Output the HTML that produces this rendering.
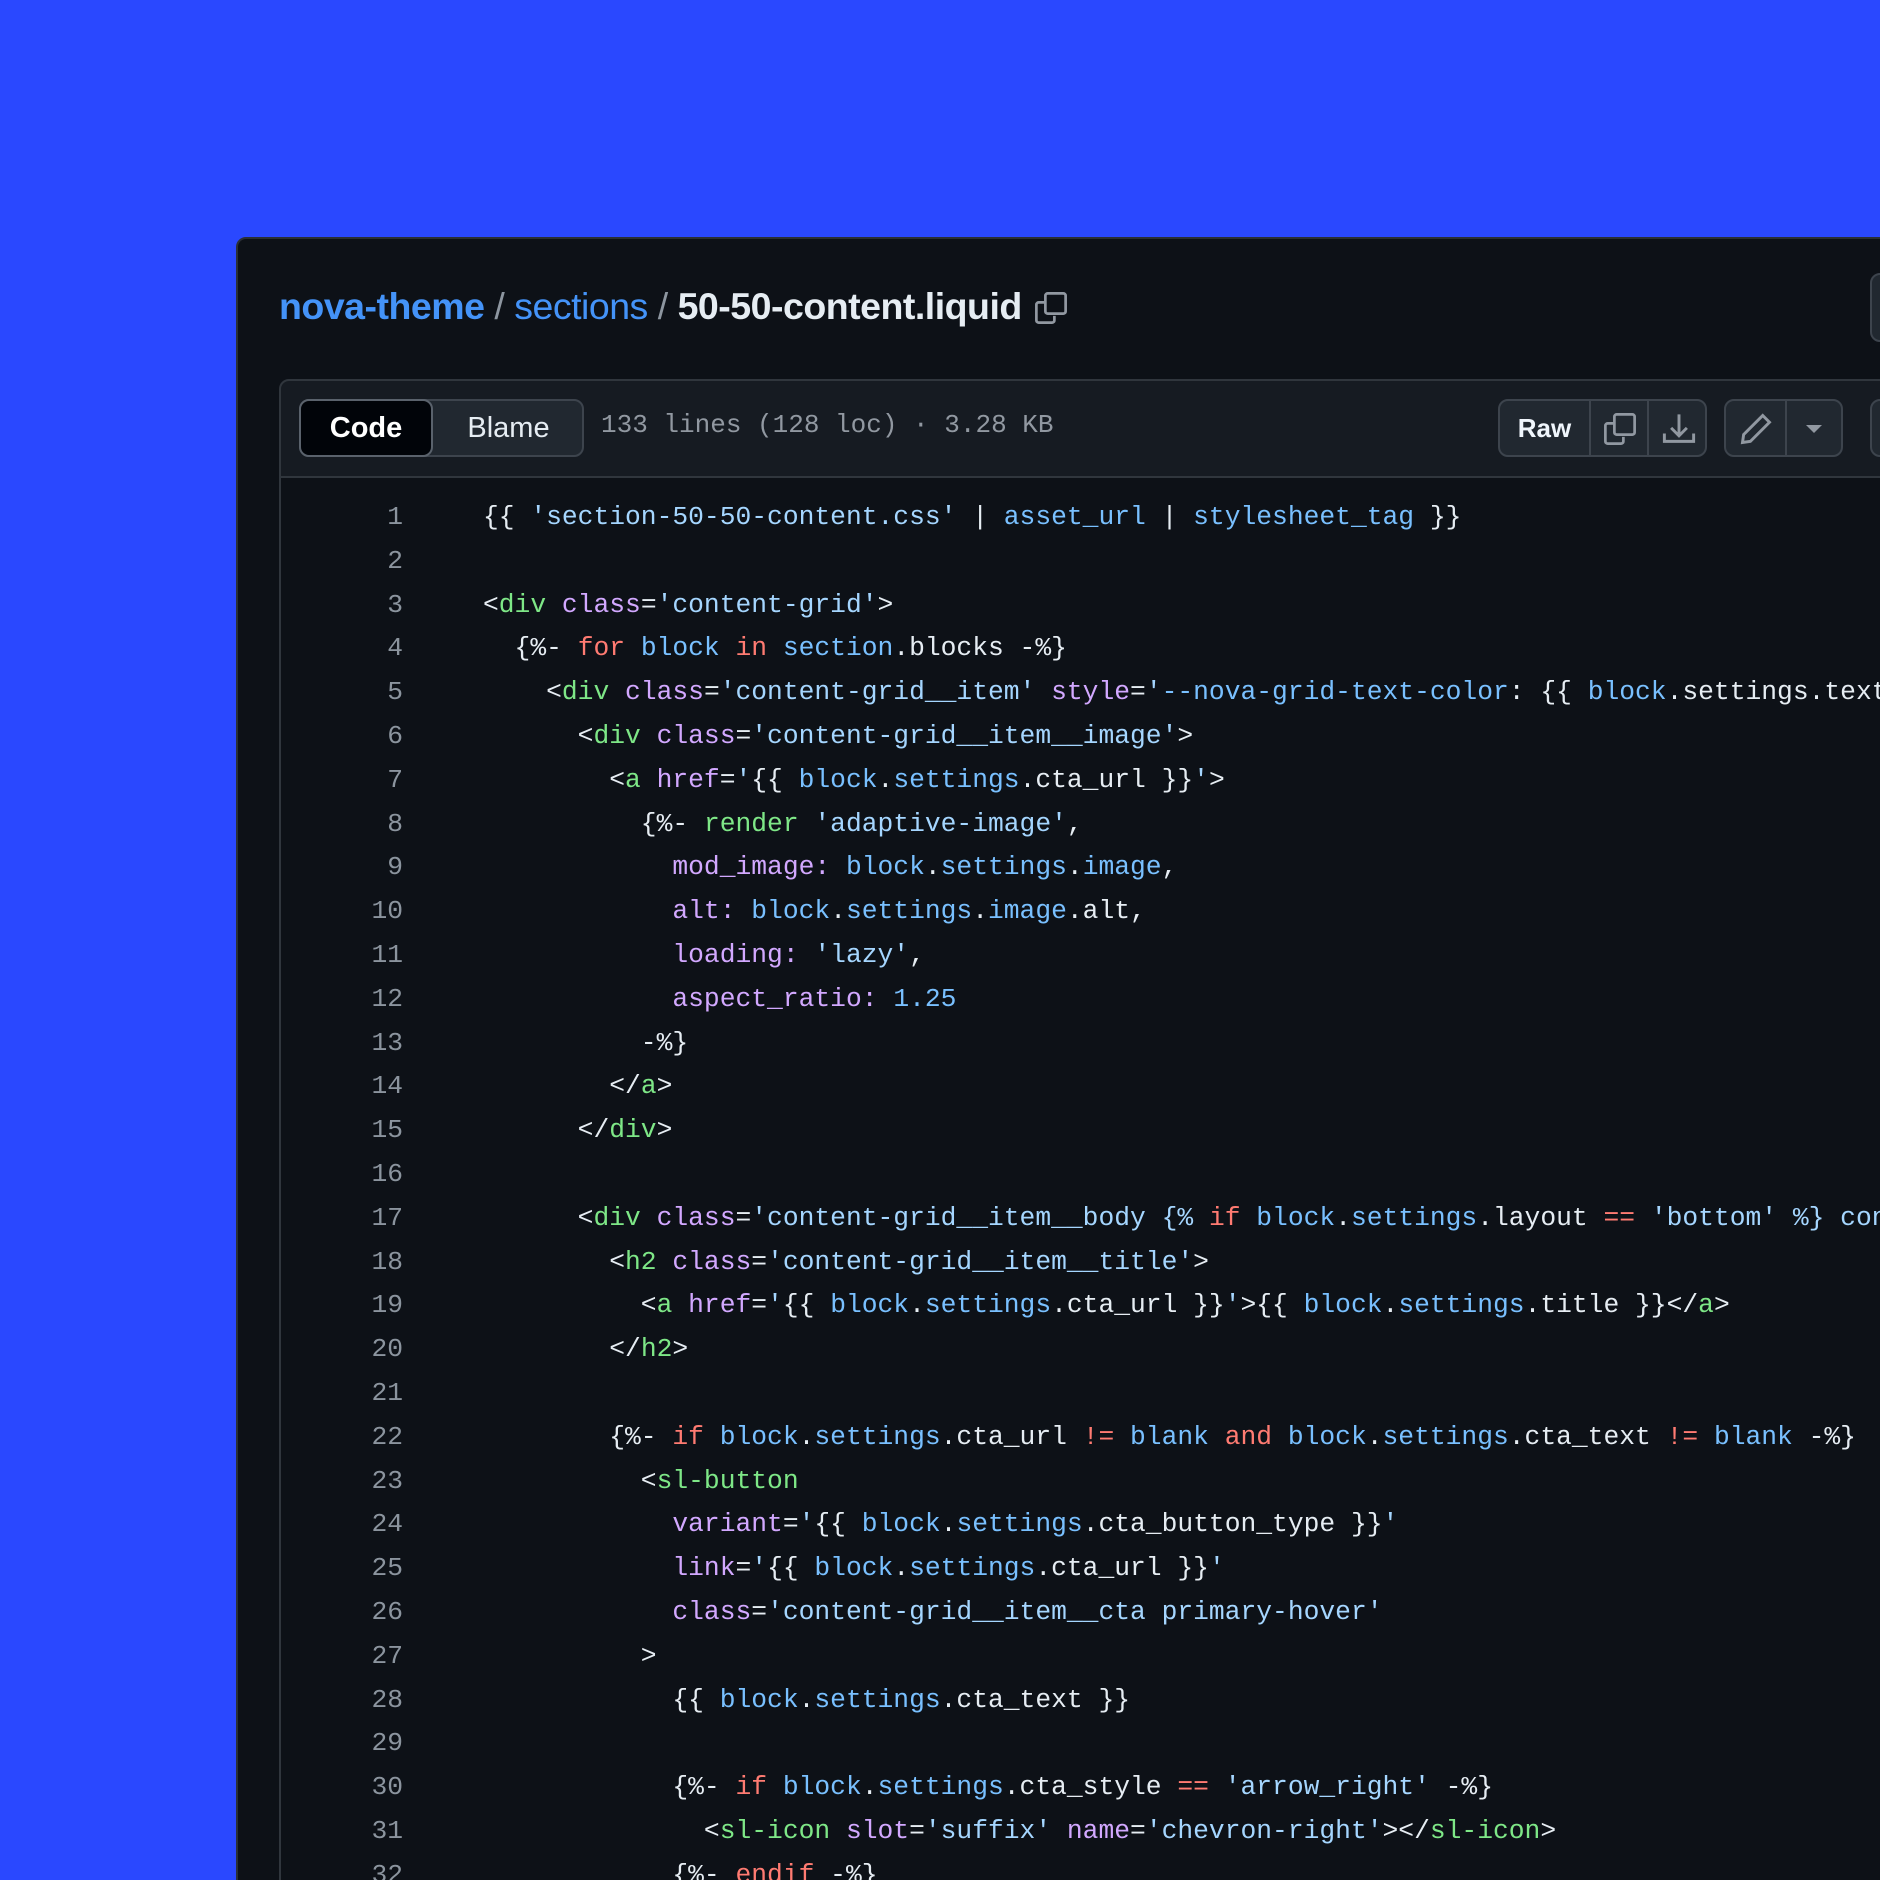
<!DOCTYPE html>
<html><head><meta charset="utf-8"><style>
*{margin:0;padding:0;box-sizing:border-box}
html,body{width:1880px;height:1880px;overflow:hidden}
body{background:#2a48ff;font-family:"Liberation Sans",sans-serif}
.clip{position:absolute;left:0;top:0;width:1880px;height:1880px;overflow:hidden}
.win{position:absolute;left:236px;top:237px;width:1700px;height:1700px;background:#0d1117;border:2px solid #2a2f36;border-radius:10px 0 0 0}
.bc{position:absolute;left:279px;top:285px;font-size:37.5px;font-weight:bold;color:#e6edf3;letter-spacing:-0.5px;white-space:nowrap}
.bc .l{color:#4493f8}.bc .sl{color:#8d96a0;font-weight:normal}
.tb{position:absolute;left:279px;top:379px;width:1700px;height:99px;background:#161b22;border:2px solid #30363d;border-radius:10px 0 0 0}
.code{position:absolute;left:279px;top:477px;width:1700px;height:1500px;border-left:2px solid #30363d}
.btn{position:absolute;height:58px;top:399px;border:2px solid #3d444d;border-radius:10px;background:#212830}
.seg{position:absolute;top:0;bottom:0;border-left:2px solid #3d444d}
.lines{position:absolute;top:496px;left:0;font-family:"Liberation Mono",monospace;font-size:26.3px;line-height:43.8px;white-space:pre}
.ln{position:absolute;left:300px;width:103px;text-align:right;color:#8b949e}
.src{position:absolute;left:483px;color:#e6edf3}
.s{color:#a5d6ff}.b{color:#79c0ff}.g{color:#7ee787}.p{color:#d2a8ff}.k{color:#ff7b72}
</style></head><body><div class="clip">
<div class="win"></div>
<div class="bc"><span class="l">nova-theme</span> <span class="sl">/</span> <span class="l" style="font-weight:normal">sections</span> <span class="sl">/</span> 50-50-content.liquid</div>
<svg style="position:absolute;left:1033px;top:290px" width="36" height="36" viewBox="0 0 16 16" fill="none" stroke="#9198a1" stroke-width="1.2"><path d="M5.5 5.5H2.5a1 1 0 0 0-1 1v7a1 1 0 0 0 1 1h6a1 1 0 0 0 1-1v-2"/><rect x="5.5" y="1.5" width="9" height="9" rx="1"/></svg>
<div style="position:absolute;left:1870px;top:273px;width:40px;height:69px;border:2px solid #3d444d;border-radius:10px;background:#212830"></div>
<div class="tb"></div>
<div style="position:absolute;left:299px;top:399px;width:285px;height:58px;border:2px solid #3d444d;border-radius:10px;background:#212830"></div>
<div style="position:absolute;left:299px;top:399px;width:134px;height:58px;border:2px solid #5a626c;border-radius:10px;background:#010409;color:#fff;font-size:29px;font-weight:bold;text-align:center;line-height:54px">Code</div>
<div style="position:absolute;left:433px;top:399px;width:151px;height:58px;color:#e6edf3;font-size:29px;text-align:center;line-height:58px">Blame</div>
<div style="position:absolute;left:601px;top:410px;font-family:'Liberation Mono',monospace;font-size:26px;color:#9198a1;white-space:pre">133 lines (128 loc) · 3.28 KB</div>
<div class="btn" style="left:1498px;width:209px"><div class="seg" style="left:89px"></div><div class="seg" style="left:147px"></div>
<div style="position:absolute;left:0;width:89px;text-align:center;line-height:54px;color:#f0f6fc;font-weight:bold;font-size:26px">Raw</div>
<svg style="position:absolute;left:102px;top:10px" width="36" height="36" viewBox="0 0 16 16" fill="none" stroke="#9198a1" stroke-width="1.2"><path d="M5.5 5.5H2.5a1 1 0 0 0-1 1v7a1 1 0 0 0 1 1h6a1 1 0 0 0 1-1v-2"/><rect x="5.5" y="1.5" width="9" height="9" rx="1"/></svg>
<svg style="position:absolute;left:161px;top:10px" width="36" height="36" viewBox="0 0 16 16" fill="none" stroke="#9198a1" stroke-width="1.3"><path d="M1.5 10v3.5h13V10M8 1.5v9M4.5 7.5 8 11l3.5-3.5"/></svg></div>
<div class="btn" style="left:1724px;width:119px"><div class="seg" style="left:59px"></div>
<svg style="position:absolute;left:12px;top:10px" width="36" height="36" viewBox="0 0 16 16" fill="none" stroke="#9198a1" stroke-width="1.3"><path d="M11 2l3 3-8.5 8.5-3.5.5.5-3.5z"/></svg>
<svg style="position:absolute;left:76px;top:20px" width="24" height="16" viewBox="0 0 12 8"><path d="M2 2h8L6 6z" fill="#9198a1"/></svg></div>
<div style="position:absolute;left:1870px;top:399px;width:40px;height:58px;border:2px solid #3d444d;border-radius:10px;background:#212830"></div>
<div class="code"></div>
<div class="lines"><div class="ln">1
2
3
4
5
6
7
8
9
10
11
12
13
14
15
16
17
18
19
20
21
22
23
24
25
26
27
28
29
30
31
32</div><div class="src">{{ <span class="s">'section-50-50-content.css'</span> | <span class="b">asset_url</span> | <span class="b">stylesheet_tag</span> }}

&lt;<span class="g">div</span> <span class="p">class</span>=<span class="s">'content-grid'</span>&gt;
  {%- <span class="k">for</span> <span class="b">block</span> <span class="k">in</span> <span class="b">section</span>.blocks -%}
    &lt;<span class="g">div</span> <span class="p">class</span>=<span class="s">'content-grid__item'</span> <span class="p">style</span>=<span class="s">'</span><span class="b">--nova-grid-text-color</span>: {{ <span class="b">block</span>.settings.text_color }}'&gt;
      &lt;<span class="g">div</span> <span class="p">class</span>=<span class="s">'content-grid__item__image'</span>&gt;
        &lt;<span class="g">a</span> <span class="p">href</span>=<span class="s">'</span>{{ <span class="b">block</span>.<span class="b">settings</span>.cta_url }}<span class="s">'</span>&gt;
          {%- <span class="g">render</span> <span class="s">'adaptive-image'</span>,
            <span class="p">mod_image:</span> <span class="b">block</span>.<span class="b">settings</span>.<span class="b">image</span>,
            <span class="p">alt:</span> <span class="b">block</span>.<span class="b">settings</span>.<span class="b">image</span>.alt,
            <span class="p">loading:</span> <span class="s">'lazy'</span>,
            <span class="p">aspect_ratio:</span> <span class="b">1.25</span>
          -%}
        &lt;/<span class="g">a</span>&gt;
      &lt;/<span class="g">div</span>&gt;

      &lt;<span class="g">div</span> <span class="p">class</span>=<span class="s">'content-grid__item__body {%</span> <span class="k">if</span> <span class="b">block</span>.<span class="b">settings</span>.layout <span class="k">==</span> <span class="s">'bottom'</span> <span class="s">%} content</span>
        &lt;<span class="g">h2</span> <span class="p">class</span>=<span class="s">'content-grid__item__title'</span>&gt;
          &lt;<span class="g">a</span> <span class="p">href</span>=<span class="s">'</span>{{ <span class="b">block</span>.<span class="b">settings</span>.cta_url }}<span class="s">'</span>&gt;{{ <span class="b">block</span>.<span class="b">settings</span>.title }}&lt;/<span class="g">a</span>&gt;
        &lt;/<span class="g">h2</span>&gt;

        {%- <span class="k">if</span> <span class="b">block</span>.<span class="b">settings</span>.cta_url <span class="k">!=</span> <span class="b">blank</span> <span class="k">and</span> <span class="b">block</span>.<span class="b">settings</span>.cta_text <span class="k">!=</span> <span class="b">blank</span> -%}
          &lt;<span class="g">sl-button</span>
            <span class="p">variant</span>=<span class="s">'</span>{{ <span class="b">block</span>.<span class="b">settings</span>.cta_button_type }}<span class="s">'</span>
            <span class="p">link</span>=<span class="s">'</span>{{ <span class="b">block</span>.<span class="b">settings</span>.cta_url }}<span class="s">'</span>
            <span class="p">class</span>=<span class="s">'content-grid__item__cta primary-hover'</span>
          &gt;
            {{ <span class="b">block</span>.<span class="b">settings</span>.cta_text }}

            {%- <span class="k">if</span> <span class="b">block</span>.<span class="b">settings</span>.cta_style <span class="k">==</span> <span class="s">'arrow_right'</span> -%}
              &lt;<span class="g">sl-icon</span> <span class="p">slot</span>=<span class="s">'suffix'</span> <span class="p">name</span>=<span class="s">'chevron-right'</span>&gt;&lt;/<span class="g">sl-icon</span>&gt;
            {%- <span class="k">endif</span> -%}</div></div>
</div></body></html>
